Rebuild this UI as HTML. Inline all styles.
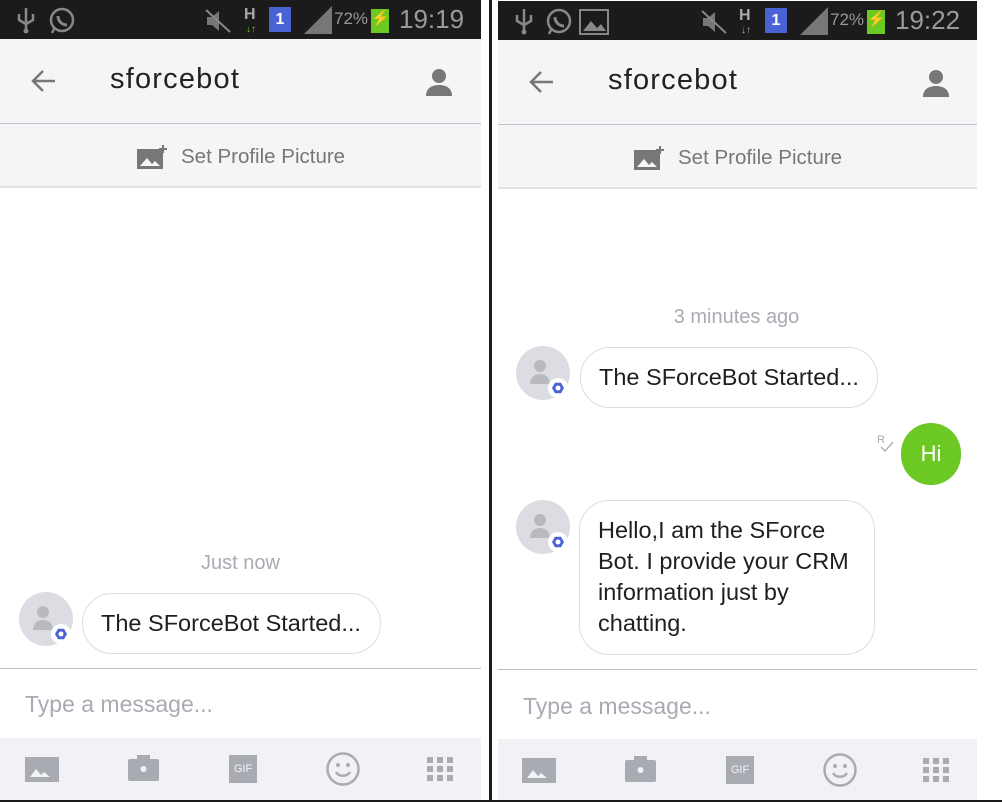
<!DOCTYPE html>
<html><head><meta charset="utf-8"><style>
*{margin:0;padding:0;box-sizing:border-box}
body{width:1002px;height:802px;background:#fff;position:relative;overflow:hidden;font-family:"Liberation Sans",sans-serif}
.p{position:absolute;top:0;height:801px;background:#fff;overflow:hidden}
.a{position:absolute}
.sb{left:0;top:0;width:100%;height:39px;background:#1b1b1b}
.hd{left:0;top:39px;width:100%;height:85px;background:#f5f5f7;border-bottom:1px solid #c4c4c8}
.pp{left:0;top:124px;width:100%;height:64px;background:#f5f5f7;border-bottom:2px solid #e2e2e6}
.title{font-size:29px;color:#222;top:63px;left:110px;letter-spacing:1.2px}
.ppt{font-size:20.5px;color:#777;top:145px;left:181px}
.ts{font-size:20px;color:#a9abb3;width:100%;text-align:center}
.av{width:54px;height:54px;border-radius:50%;background:#dcdde2}
.bub{border:1px solid #dcdde3;border-radius:30px;background:#fff;font-size:23.5px;color:#1f1f1f;padding:0 18px;line-height:31px;white-space:nowrap}
.line{left:0;width:100%;height:1px;background:#bdbdc3}
.inp{font-size:23px;color:#a9abb3;left:25px}
.tb{left:0;width:100%;height:62px;background:#f2f2f6}
.st{color:#9a9a9a;font-size:26px;top:4px}
</style></head><body>

<!-- LEFT -->
<div class="p" style="left:0;width:481px">
 <div class="a sb">
  <svg class="a" style="left:14px;top:6px" width="24" height="28" viewBox="0 0 24 28"><path d="M12 2v24M5 8v6l7 4 7-4V8" stroke="#888" stroke-width="2.5" fill="none"/><circle cx="12" cy="25" r="2.5" fill="#888"/></svg>
  <svg class="a" style="left:48px;top:7px" width="28" height="28" viewBox="0 0 28 28"><circle cx="14" cy="13" r="11" stroke="#888" stroke-width="2.5" fill="none"/><path d="M4 26l3-6" stroke="#888" stroke-width="2.5"/><path d="M10 9c0 5 4 9 9 9" stroke="#888" stroke-width="3" fill="none"/></svg>
  <svg class="a" style="left:205px;top:9px" width="26" height="24"><path d="M2 8h5l7-6v20l-7-6H2z" fill="#777"/><path d="M1 1l24 22" stroke="#888" stroke-width="2"/></svg>
  <div class="a" style="left:244px;top:6px;color:#aaa;font-size:16px;font-weight:bold">H</div>
  <div class="a" style="left:246px;top:24px;color:#6c3;font-size:10px">↓↑</div>
  <div class="a" style="left:269px;top:7px;width:22px;height:25px;background:#4a63d4;color:#fff;font-size:16px;text-align:center;line-height:25px;font-weight:bold">1</div>
  <svg class="a" style="left:304px;top:6px" width="28" height="28"><path d="M0 28L28 0v28z" fill="#777"/></svg>
  <div class="a" style="left:334px;top:9px;color:#999;font-size:17px">72%</div>
  <div class="a" style="left:371px;top:9px;width:18px;height:24px;background:#6cc823;color:#fff;font-size:15px;text-align:center">⚡</div>
  <div class="a st" style="left:399px">19:19</div>
 </div>
 <div class="a hd"></div>
 <svg class="a" style="left:29px;top:68px" width="28" height="26"><path d="M26 13H4M14 3L4 13l10 10" stroke="#777" stroke-width="2.5" fill="none"/></svg>
 <div class="a title">sforcebot</div>
 <svg class="a" style="left:426px;top:68px" width="26" height="28"><circle cx="13" cy="8" r="7" fill="#777"/><path d="M0 28c0-8 6-11 13-11s13 3 13 11z" fill="#777"/></svg>
 <div class="a pp"></div>
 <svg class="a" style="left:137px;top:145px" width="30" height="24"><rect x="0" y="4" width="26" height="20" fill="#777"/><path d="M3 21l7-8 5 6 3-3 5 5z" fill="#f5f5f7"/><path d="M26 0v8M22 4h8" stroke="#777" stroke-width="2"/></svg>
 <div class="a ppt">Set Profile Picture</div>
 <div class="a ts" style="top:552px">Just now</div>
 <div class="a av" style="left:19px;top:592px"></div>
 <svg class="a" style="left:19px;top:592px" width="60" height="60"><circle cx="24" cy="20" r="6" fill="#b9bac0"/><path d="M14 38c0-7 5-10 10-10s10 3 10 10z" fill="#b9bac0"/><circle cx="42" cy="42" r="10" fill="#fff"/><polygon points="36,42 39,36.8 45,36.8 48,42 45,47.2 39,47.2" fill="#4a63d4"/><circle cx="42" cy="42" r="2.5" fill="#fff"/></svg>
 <div class="a bub" style="left:82px;top:593px;width:299px;height:61px;line-height:59px">The SForceBot Started...</div>
 <div class="a line" style="top:668px"></div>
 <div class="a inp" style="top:691px">Type a message...</div>
 <div class="a tb" style="top:738px"></div>
 <svg class="a" style="left:25px;top:757px" width="34" height="25"><rect width="34" height="25" fill="#a9abb3"/><path d="M5 20l6-8 5 6 3-3 6 5z" fill="#f2f2f6"/></svg>
 <svg class="a" style="left:128px;top:754px" width="31" height="28"><rect y="5" width="31" height="22" rx="2" fill="#a9abb3"/><rect x="9" y="1" width="13" height="6" fill="#a9abb3"/><circle cx="15.5" cy="15" r="3" fill="#f2f2f6"/></svg>
 <div class="a" style="left:229px;top:755px;width:28px;height:28px;background:#a9abb3;color:#f2f2f6;font-size:11px;line-height:28px;text-align:center">GIF</div>
 <svg class="a" style="left:325px;top:751px" width="36" height="36"><circle cx="18" cy="18" r="15.5" stroke="#a9abb3" stroke-width="2.5" fill="none"/><circle cx="13" cy="14" r="2" fill="#a9abb3"/><circle cx="23" cy="14" r="2" fill="#a9abb3"/><path d="M11 21c3 5 11 5 14 0" stroke="#a9abb3" stroke-width="2.5" fill="none"/></svg>
 <svg class="a" style="left:427px;top:757px" width="26" height="24"><g fill="#a9abb3"><rect x="0" y="0" width="6" height="6"/><rect x="10" y="0" width="6" height="6"/><rect x="20" y="0" width="6" height="6"/><rect x="0" y="9" width="6" height="6"/><rect x="10" y="9" width="6" height="6"/><rect x="20" y="9" width="6" height="6"/><rect x="0" y="18" width="6" height="6"/><rect x="10" y="18" width="6" height="6"/><rect x="20" y="18" width="6" height="6"/></g></svg>
</div>

<div class="a" style="left:489px;top:0;width:3px;height:802px;background:#1b1b1b"></div>

<!-- RIGHT -->
<div class="p" style="left:498px;width:479px;top:1px">
 <div class="a sb">
  <svg class="a" style="left:14px;top:6px" width="24" height="28" viewBox="0 0 24 28"><path d="M12 2v24M5 8v6l7 4 7-4V8" stroke="#888" stroke-width="2.5" fill="none"/><circle cx="12" cy="25" r="2.5" fill="#888"/></svg>
  <svg class="a" style="left:47px;top:7px" width="28" height="28" viewBox="0 0 28 28"><circle cx="14" cy="13" r="11" stroke="#888" stroke-width="2.5" fill="none"/><path d="M4 26l3-6" stroke="#888" stroke-width="2.5"/><path d="M10 9c0 5 4 9 9 9" stroke="#888" stroke-width="3" fill="none"/></svg>
  <svg class="a" style="left:81px;top:8px" width="30" height="26"><rect x="1" y="1" width="28" height="24" stroke="#888" stroke-width="2" fill="none"/><path d="M4 22l8-10 6 7 4-4 5 7z" fill="#888"/></svg>
  <svg class="a" style="left:203px;top:9px" width="26" height="24"><path d="M2 8h5l7-6v20l-7-6H2z" fill="#777"/><path d="M1 1l24 22" stroke="#888" stroke-width="2"/></svg>
  <div class="a" style="left:241px;top:6px;color:#aaa;font-size:16px;font-weight:bold">H</div>
  <div class="a" style="left:243px;top:24px;color:#aaa;font-size:10px">↓↑</div>
  <div class="a" style="left:267px;top:7px;width:22px;height:25px;background:#4a63d4;color:#fff;font-size:16px;text-align:center;line-height:25px;font-weight:bold">1</div>
  <svg class="a" style="left:302px;top:6px" width="28" height="28"><path d="M0 28L28 0v28z" fill="#777"/></svg>
  <div class="a" style="left:332px;top:9px;color:#999;font-size:17px">72%</div>
  <div class="a" style="left:369px;top:9px;width:18px;height:24px;background:#6cc823;color:#fff;font-size:15px;text-align:center">⚡</div>
  <div class="a st" style="left:397px">19:22</div>
 </div>
 <div class="a hd"></div>
 <svg class="a" style="left:29px;top:68px" width="28" height="26"><path d="M26 13H4M14 3L4 13l10 10" stroke="#777" stroke-width="2.5" fill="none"/></svg>
 <div class="a title">sforcebot</div>
 <svg class="a" style="left:425px;top:68px" width="26" height="28"><circle cx="13" cy="8" r="7" fill="#777"/><path d="M0 28c0-8 6-11 13-11s13 3 13 11z" fill="#777"/></svg>
 <div class="a pp"></div>
 <svg class="a" style="left:136px;top:145px" width="30" height="24"><rect x="0" y="4" width="26" height="20" fill="#777"/><path d="M3 21l7-8 5 6 3-3 5 5z" fill="#f5f5f7"/><path d="M26 0v8M22 4h8" stroke="#777" stroke-width="2"/></svg>
 <div class="a ppt" style="left:180px">Set Profile Picture</div>
 <div class="a ts" style="top:305px;left:-1px">3 minutes ago</div>
 <div class="a av" style="left:18px;top:345px"></div>
 <svg class="a" style="left:18px;top:345px" width="60" height="60"><circle cx="24" cy="20" r="6" fill="#b9bac0"/><path d="M14 38c0-7 5-10 10-10s10 3 10 10z" fill="#b9bac0"/><circle cx="42" cy="42" r="10" fill="#fff"/><polygon points="36,42 39,36.8 45,36.8 48,42 45,47.2 39,47.2" fill="#4a63d4"/><circle cx="42" cy="42" r="2.5" fill="#fff"/></svg>
 <div class="a bub" style="left:82px;top:346px;width:298px;height:61px;line-height:59px">The SForceBot Started...</div>
 <div class="a" style="left:379px;top:433px;color:#aaa;font-size:11px">R</div>
 <svg class="a" style="left:382px;top:440px" width="14" height="12"><path d="M1 6l4 4 8-9" stroke="#aaa" stroke-width="1.3" fill="none"/></svg>
 <div class="a" style="left:403px;top:422px;width:60px;height:62px;border-radius:30px;background:#6cc823;color:#fff;font-size:22px;text-align:center;line-height:62px">Hi</div>
 <div class="a av" style="left:18px;top:499px"></div>
 <svg class="a" style="left:18px;top:499px" width="60" height="60"><circle cx="24" cy="20" r="6" fill="#b9bac0"/><path d="M14 38c0-7 5-10 10-10s10 3 10 10z" fill="#b9bac0"/><circle cx="42" cy="42" r="10" fill="#fff"/><polygon points="36,42 39,36.8 45,36.8 48,42 45,47.2 39,47.2" fill="#4a63d4"/><circle cx="42" cy="42" r="2.5" fill="#fff"/></svg>
 <div class="a bub" style="left:81px;top:499px;width:296px;height:155px;padding-top:14px">Hello,I am the SForce<br>Bot. I provide your CRM<br>information just by<br>chatting.</div>
 <div class="a line" style="top:668px"></div>
 <div class="a inp" style="top:692px">Type a message...</div>
 <div class="a tb" style="top:738px"></div>
 <svg class="a" style="left:24px;top:757px" width="34" height="25"><rect width="34" height="25" fill="#a9abb3"/><path d="M5 20l6-8 5 6 3-3 6 5z" fill="#f2f2f6"/></svg>
 <svg class="a" style="left:127px;top:754px" width="31" height="28"><rect y="5" width="31" height="22" rx="2" fill="#a9abb3"/><rect x="9" y="1" width="13" height="6" fill="#a9abb3"/><circle cx="15.5" cy="15" r="3" fill="#f2f2f6"/></svg>
 <div class="a" style="left:228px;top:755px;width:28px;height:28px;background:#a9abb3;color:#f2f2f6;font-size:11px;line-height:28px;text-align:center">GIF</div>
 <svg class="a" style="left:324px;top:751px" width="36" height="36"><circle cx="18" cy="18" r="15.5" stroke="#a9abb3" stroke-width="2.5" fill="none"/><circle cx="13" cy="14" r="2" fill="#a9abb3"/><circle cx="23" cy="14" r="2" fill="#a9abb3"/><path d="M11 21c3 5 11 5 14 0" stroke="#a9abb3" stroke-width="2.5" fill="none"/></svg>
 <svg class="a" style="left:425px;top:757px" width="26" height="24"><g fill="#a9abb3"><rect x="0" y="0" width="6" height="6"/><rect x="10" y="0" width="6" height="6"/><rect x="20" y="0" width="6" height="6"/><rect x="0" y="9" width="6" height="6"/><rect x="10" y="9" width="6" height="6"/><rect x="20" y="9" width="6" height="6"/><rect x="0" y="18" width="6" height="6"/><rect x="10" y="18" width="6" height="6"/><rect x="20" y="18" width="6" height="6"/></g></svg>
</div>

<div class="a" style="left:0;top:800px;width:1002px;height:2px;background:#1b1b1b"></div>
</body></html>
